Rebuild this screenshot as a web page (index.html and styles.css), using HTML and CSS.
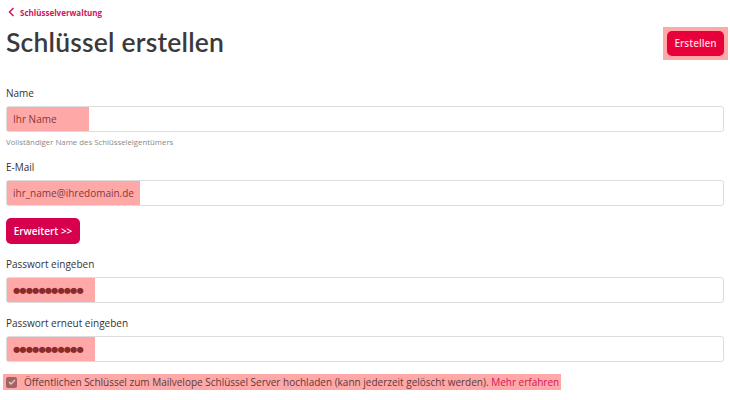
FILE: index.html
```html
<!DOCTYPE html>
<html lang="de">
<head>
<meta charset="utf-8">
<title>Schlüssel erstellen</title>
<link rel="stylesheet" href="styles.css">
</head>
<body>
<div class="page">
  <a class="back" href="#"><svg class="chev" width="7" height="10" viewBox="0 0 7 10"><path d="M5.5 1 L1.5 5 L5.5 9" fill="none" stroke="currentColor" stroke-width="1.5"/></svg>Schlüsselverwaltung</a>
  <div class="header">
    <h1 class="title">Schlüssel erstellen</h1>
    <span class="hl hl-btn"><button class="btn btn-create">Erstellen</button></span>
  </div>
  <div class="field field-name">
    <label class="label">Name</label>
    <div class="input"><span class="hl ph ph-name">Ihr Name</span></div>
    <div class="help">Vollständiger Name des Schlüsseleigentümers</div>
  </div>
  <div class="field field-mail">
    <label class="label">E-Mail</label>
    <div class="input"><span class="hl ph ph-mail">ihr_name@ihredomain.de</span></div>
  </div>
  <button class="btn btn-adv">Erweitert &gt;&gt;</button>
  <div class="field field-pw">
    <label class="label">Passwort eingeben</label>
    <div class="input"><span class="hl ph dots">●●●●●●●●●●●</span></div>
  </div>
  <div class="field field-pw">
    <label class="label">Passwort erneut eingeben</label>
    <div class="input"><span class="hl ph dots">●●●●●●●●●●●</span></div>
  </div>
  <div class="check-row">
    <span class="hl check-hl"><span class="box"><svg width="8" height="6" viewBox="0 0 8 6"><path d="M1 3 L3 5 L7 1" fill="none" stroke="#e8c8c8" stroke-width="1.4"/></svg></span>Öffentlichen Schlüssel zum Mailvelope Schlüssel Server hochladen (kann jederzeit gelöscht werden). <a class="more" href="#">Mehr erfahren</a></span>
  </div>
</div>
</body>
</html>
```
FILE: styles.css
```css
* { box-sizing: border-box; }
body {
  margin: 0;
  background: #fff;
  font-family: "Open Sans", Lato, "Liberation Sans", sans-serif;
  color: #333;
}
.page {
  padding: 5px 6px 0 6px;
  width: 730px;
}
.back {
  display: flex;
  align-items: center;
  gap: 5px;
  font-size: 8px;
  font-weight: bold;
  color: #d4145a;
  text-decoration: none;
  height: 14px;
  padding-left: 2px;
}
.header {
  display: flex;
  justify-content: space-between;
  align-items: center;
  margin-top: 2px;
  height: 44px;
}
.title {
  margin: -2px 0 0 0;
  font-family: Lato, "Open Sans", sans-serif;
  font-size: 26.5px;
  font-weight: 600;
  color: #3a3a3a;
  letter-spacing: 0.2px;
}
.hl { background: #ffa8a8; }
.hl-btn {
  padding: 4px;
  margin-right: -4px;
  display: flex;
}
.btn {
  border: none;
  color: #fff;
  font-family: inherit;
  font-weight: 600;
  border-radius: 5px;
  cursor: pointer;
}
.btn-create {
  background: #e8003a;
  color: #ffd6dc;
  font-size: 10px;
  width: 57px;
  height: 25px;
  padding: 0;
}
.field-name { margin-top: 21px; }
.field-mail { margin-top: 13px; }
.field-pw { margin-top: 13px; }
.label {
  display: block;
  font-size: 10px;
  color: #333;
  height: 14px;
  line-height: 14px;
}
.input {
  margin-top: 6px;
  height: 26px;
  border: 1px solid #ddd;
  border-radius: 3px;
  display: flex;
}
.ph {
  display: flex;
  align-items: center;
  padding: 0 6px;
  font-size: 10px;
  color: #843838;
  height: 24px;
}
.ph-name { width: 82px; }
.ph-mail { width: 133px; }
.help {
  font-size: 7.8px;
  color: #888;
  margin-top: 5px;
  height: 10px;
  line-height: 10px;
}
.dots {
  width: 88px;
  font-family: "DejaVu Sans", sans-serif;
  font-size: 8.2px;
  letter-spacing: -0.8px;
  color: #8a2a2a;
  padding: 0 6px 0 6px;
}
.btn-adv {
  display: block;
  margin-top: 12px;
  background: #d6004f;
  font-size: 10px;
  width: 74px;
  height: 26px;
  padding: 0;
}
.check-row {
  margin-top: 12px;
  margin-left: -3px;
  display: flex;
}
.check-hl {
  display: flex;
  align-items: center;
  height: 16px;
  padding: 0 2px 0 3px;
  font-size: 10px;
  color: #5d3a3a;
  white-space: pre;
}
.box {
  width: 11px;
  height: 11px;
  background: #a06464;
  border-radius: 2px;
  margin-right: 7px;
  display: flex;
  align-items: center;
  justify-content: center;
}
.more {
  color: #d4145a;
  text-decoration: none;
}
```
